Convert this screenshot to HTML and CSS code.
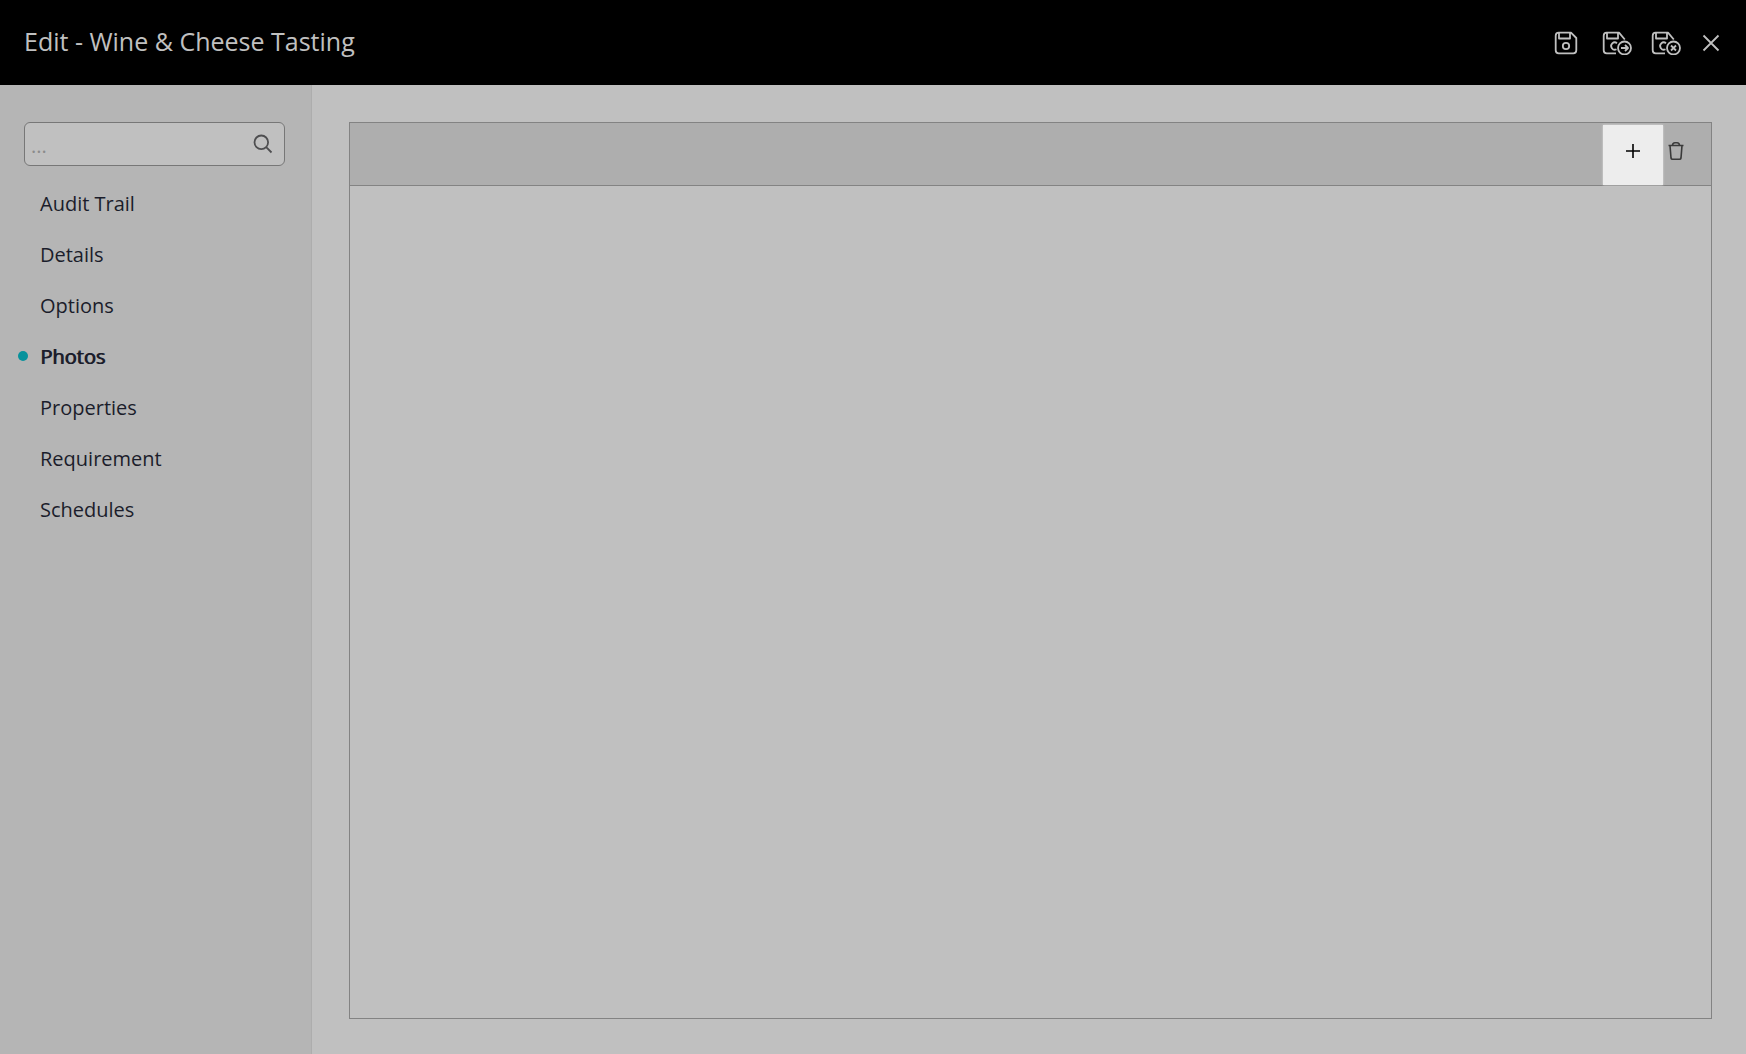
FILE: index.html
```html
<!DOCTYPE html>
<html lang="en">
<head>
<meta charset="utf-8">
<meta name="viewport" content="width=device-width, initial-scale=1">
<title>Edit - Wine &amp; Cheese Tasting</title>
<link rel="stylesheet" href="styles.css">
</head>
<body>
<header class="header">
  <h1 class="title">Edit - Wine &amp; Cheese Tasting</h1>
  <div class="actions">
    <button class="icon-button save" type="button" aria-label="Save">
      <svg width="24" height="24" viewBox="0 0 24 24"><path d="M4.700 1.700H17L22.300 7V19.300Q22.300 22.300 19.300 22.300H4.700Q1.700 22.300 1.700 19.300V4.700Q1.700 1.700 4.700 1.700ZM5 2V7.500H16V2"/><circle cx="12" cy="15" r="3.2"/></svg>
    </button>
    <button class="icon-button wide" type="button" aria-label="Save and continue">
      <svg width="30" height="24" viewBox="0 0 30 24"><path d="M14 22.3H4.700Q1.700 22.3 1.700 19.300V4.700Q1.700 1.700 4.700 1.700H17L22.800 8.500M5 2V7.500H16V2M15 12.200A3.600 3.600 0 1 0 14.500 18.200"/><circle cx="22.5" cy="17" r="6.5"/><path d="M19 17H26M23 14L26 17L23 20"/></svg>
    </button>
    <button class="icon-button wide" type="button" aria-label="Save and close">
      <svg width="30" height="24" viewBox="0 0 30 24"><path d="M14 22.3H4.700Q1.700 22.3 1.700 19.300V4.700Q1.700 1.700 4.700 1.700H17L22.800 8.500M5 2V7.500H16V2M15 12.200A3.600 3.600 0 1 0 14.500 18.200"/><circle cx="22.5" cy="17" r="6.5"/><path d="M20 14.5L25 19.5M25 14.5L20 19.5"/></svg>
    </button>
    <button class="icon-button close" type="button" aria-label="Close">
      <svg width="18" height="18" viewBox="0 0 18 18"><path d="M1.5 1.5L16.5 16.5M16.5 1.5L1.5 16.5"/></svg>
    </button>
  </div>
</header>
<div class="body">
  <aside class="sidebar">
    <form class="search" role="search">
      <input class="search-input" type="search" placeholder="..." aria-label="Search sections">
      <button class="search-button" type="button" aria-label="Search">
        <svg width="20" height="20" viewBox="0 0 20 20"><circle cx="8.3" cy="8.3" r="6.8"/><path d="M13.2 13.2L18.5 18.5"/></svg>
      </button>
    </form>
    <nav class="nav" aria-label="Sections">
      <a class="nav-link" href="#audit-trail">Audit Trail</a>
      <a class="nav-link" href="#details">Details</a>
      <a class="nav-link" href="#options">Options</a>
      <a class="nav-link active" href="#photos" aria-current="page">Photos</a>
      <a class="nav-link" href="#properties">Properties</a>
      <a class="nav-link" href="#requirement">Requirement</a>
      <a class="nav-link" href="#schedules">Schedules</a>
    </nav>
  </aside>
  <main class="content">
    <section class="panel" aria-label="Photos">
      <div class="toolbar">
        <button class="tool add" type="button" aria-label="Add photo">
          <svg width="16" height="16" viewBox="0 0 16 16"><path d="M8 1V15M1 8H15"/></svg>
        </button>
        <button class="tool delete" type="button" aria-label="Delete photo">
          <svg width="16" height="20" viewBox="0 0 16 20"><path d="M.5 4.5H15.5M2 4.5L3 17Q3.2 18.2 4.5 18.2H11.5Q12.8 18.2 13 17L14 4.5M4.5 4.5Q4.5 1.8 7 1.8H9Q11.5 1.8 11.5 4.5"/></svg>
        </button>
      </div>
    </section>
  </main>
</div>
</body>
</html>
```

FILE: styles.css
```css
* {
  box-sizing: border-box;
}

body {
  display: flex;
  flex-direction: column;
  min-height: 100vh;
  margin: 0;
  background: #c0c0c0;
  color: #1b1d2b;
  font: 20px/27px "Open Sans", "Noto Sans", sans-serif;
}

button {
  display: flex;
  align-items: center;
  justify-content: center;
  padding: 0;
  border: 0;
  background: none;
  color: inherit;
}

svg {
  flex: none;
  fill: none;
  stroke: currentColor;
  stroke-width: 1.6;
  stroke-linejoin: round;
}

.header {
  display: flex;
  align-items: center;
  justify-content: space-between;
  height: 85px;
  padding: 0 23px 0 24px;
  background: #000;
  color: #c0c0c0;
}

.title {
  margin: 0;
  padding-bottom: 3px;
  font-size: 25px;
  font-weight: 400;
  line-height: 36px;
}

.actions {
  display: flex;
  align-items: center;
}

.icon-button {
  width: 24px;
  height: 32px;
}

.icon-button svg {
  stroke-width: 1.8;
}

.icon-button.save {
  margin-right: 5px;
}

.icon-button.wide {
  width: 30px;
  margin-left: 19px;
}

.icon-button.close {
  margin-left: 18px;
}

.body {
  display: flex;
  flex: 1;
}

.sidebar {
  flex: none;
  width: 312px;
  padding: 37px 26px 24px 24px;
  border-right: 1px solid #adadad;
  background: #b5b5b5;
}

.search {
  display: flex;
  height: 44px;
  border: 1px solid #777;
  border-radius: 6px;
  background: #c0c0c0;
}

.search-input {
  flex: 1;
  min-width: 0;
  padding: 2px 6px 0;
  border: 0;
  background: none;
  color: inherit;
  font: inherit;
  outline: 0;
}

.search-input::placeholder {
  color: #8b8b8b;
  opacity: 1;
}

.search-button {
  width: 42px;
  color: #4e4e50;
}

.search-button svg {
  stroke-width: 1.8;
}

.nav {
  display: flex;
  flex-direction: column;
  margin-top: 12px;
}

.nav-link {
  position: relative;
  padding: 12px 16px;
  color: inherit;
  text-decoration: none;
}

.nav-link.active {
  text-shadow: 1px 0 0 currentColor;
}

.nav-link.active::before {
  content: "";
  position: absolute;
  top: 20px;
  left: -6px;
  width: 10px;
  height: 10px;
  border-radius: 50%;
  background: #06929c;
}

.content {
  display: flex;
  flex: 1;
  padding: 37px 34px 35px 37px;
}

.panel {
  flex: 1;
  border: 1px solid #838383;
}

.toolbar {
  display: flex;
  justify-content: flex-end;
  height: 63px;
  padding: 2px 22px 0 0;
  border-bottom: 1px solid #838383;
  background: #aeaeae;
}

.tool {
  height: 60px;
  padding-bottom: 8px;
}

.add {
  width: 60px;
  background: #ededed;
  box-shadow: 0 0 2px #dcdcdc;
  color: #000;
}

.delete {
  width: 26px;
  color: #3a3a3a;
}
```
